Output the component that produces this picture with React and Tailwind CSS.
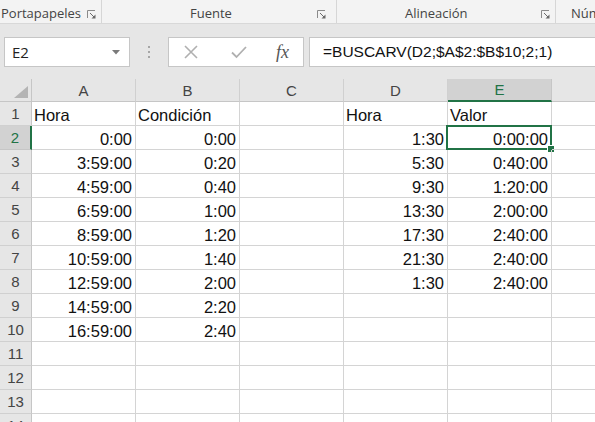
import React from "react";

const A = ["Hora","0:00","3:59:00","4:59:00","6:59:00","8:59:00","10:59:00","12:59:00","14:59:00","16:59:00","","","",""];
const B = ["Condición","0:00","0:20","0:40","1:00","1:20","1:40","2:00","2:20","2:40","","","",""];
const D = ["Hora","1:30","5:30","9:30","13:30","17:30","21:30","1:30","","","","","",""];
const E = ["Valor","0:00:00","0:40:00","1:20:00","2:00:00","2:40:00","2:40:00","2:40:00","","","","","",""];

function Launcher() {
  return (
    <svg width="9" height="9" viewBox="0 0 9 9" className="shrink-0">
      <path d="M0.5 8 V0.5 H8" fill="none" stroke="#8a8a8a" strokeWidth="1" />
      <path d="M3 3 L7.5 7.5" fill="none" stroke="#6a6a6a" strokeWidth="1" />
      <path d="M8.5 8.5 H4.5 L8.5 4.5 Z" fill="#6a6a6a" />
    </svg>
  );
}

function Cell({ v, row, col }) {
  const left = row === 1;
  const selected = row === 2 && col === "E";
  return (
    <div
      className={
        "relative h-[24px] border-r border-b border-[#d4d4d4] flex items-end pb-[2px] text-[16.5px] leading-[16px] text-[#111] whitespace-nowrap " +
        (left ? "justify-start pl-[2px]" : "justify-end pr-[3px]")
      }
    >
      {v}
      {selected && (
        <div className="absolute top-[-1px] left-[-2px] right-[-1px] bottom-[-1px] border-2 border-[#217346]">
          <div className="absolute right-[-5px] bottom-[-5px] w-[8px] h-[8px] bg-[#217346] border border-white" />
        </div>
      )}
    </div>
  );
}

export default function App() {
  const cols = ["A", "B", "C", "D", "E", "F"];
  const rows = Array.from({ length: 14 }, (_, i) => i + 1);
  return (
    <div className="w-[595px] h-[422px] overflow-hidden bg-white" style={{ fontFamily: '"Liberation Sans", Arial, sans-serif' }}>
      {/* Ribbon group labels */}
      <div className="h-[24px] bg-[#f3f3f3] border-b border-[#d8d8d8] flex text-[13px] text-[#444] overflow-hidden" style={{ fontFamily: '"Open Sans", "Noto Sans", sans-serif' }}>
        <div className="w-[102px] shrink-0 border-r border-[#d6d6d6] flex items-center pt-[5px] h-[23px]">
          <span className="w-[87px] pl-[1px] whitespace-nowrap">Portapapeles</span>
          <Launcher />
        </div>
        <div className="w-[235px] shrink-0 border-r border-[#d6d6d6] flex items-center pt-[5px] h-[23px]">
          <span className="pl-[88px] w-[215px]">Fuente</span>
          <Launcher />
        </div>
        <div className="w-[219px] shrink-0 border-r border-[#d6d6d6] flex items-center pt-[5px] h-[23px]">
          <span className="pl-[68px] w-[204px]">Alineación</span>
          <Launcher />
        </div>
        <div className="flex items-center pt-[5px] h-[23px] pl-[15px] whitespace-nowrap">Número</div>
      </div>

      {/* Formula bar */}
      <div className="h-[55px] bg-[#e6e6e6] flex items-start pt-[13px]">
        <div className="ml-[4px] w-[126px] h-[30px] bg-white border border-[#c6c6c6] flex items-center justify-between pl-[7px] pr-[9px] text-[15px] text-[#222]" style={{ fontFamily: '"Open Sans", "Noto Sans", sans-serif' }}>
          <span>E2</span>
          <svg width="8" height="5" viewBox="0 0 8 5"><path d="M0 0 H8 L4 4.5 Z" fill="#7a7a7a" /></svg>
        </div>
        <div className="w-[38px] h-[30px] flex flex-col items-center justify-center gap-[3px]">
          <div className="w-[2px] h-[2px] bg-[#a6a6a6]" />
          <div className="w-[2px] h-[2px] bg-[#a6a6a6]" />
          <div className="w-[2px] h-[2px] bg-[#a6a6a6]" />
        </div>
        <div className="w-[136px] h-[30px] bg-white border border-[#c6c6c6] flex items-center">
          <svg width="14" height="14" viewBox="0 0 14 14" className="ml-[15px]">
            <path d="M1 1 L13 13 M13 1 L1 13" stroke="#b0b0b0" strokeWidth="1.6" fill="none" />
          </svg>
          <svg width="16" height="14" viewBox="0 0 16 14" className="ml-[33px]">
            <path d="M1 7.5 L5.5 12 L15 2" stroke="#b0b0b0" strokeWidth="1.8" fill="none" />
          </svg>
          <span className="ml-[29px] italic text-[18px] text-[#555] leading-none" style={{ fontFamily: '"Liberation Serif", "DejaVu Serif", serif' }}>fx</span>
        </div>
        <div className="ml-[5px] flex-1 h-[30px] bg-white border border-[#c6c6c6] border-r-0 flex items-center pl-[13px] text-[15.5px] text-[#111] whitespace-nowrap">
          =BUSCARV(D2;$A$2:$B$10;2;1)
        </div>
      </div>

      {/* Grid */}
      <div className="grid grid-cols-[32px_104px_104px_104px_104px_104px_104px] w-[656px]">
        {/* header row */}
        <div className="h-[23px] bg-[#e6e6e6] border-r border-b border-[#c6c6c6] relative">
          <svg width="14" height="12" viewBox="0 0 14 12" className="absolute right-[3px] bottom-[3px]">
            <path d="M14 0 V12 H0 Z" fill="#b4b4b4" />
          </svg>
        </div>
        {cols.map((c) =>
          c === "E" ? (
            <div key={c} className="h-[23px] bg-[#d2d2d2] border-r border-[#c6c6c6] border-b-2 border-b-[#217346] flex items-center justify-center pt-[2px] text-[15px] text-[#217346]">
              {c}
            </div>
          ) : (
            <div key={c} className="h-[23px] bg-[#e6e6e6] border-r border-b border-[#d0d0d0] border-b-[#c6c6c6] flex items-center justify-center pt-[2px] text-[15px] text-[#444]">
              {c}
            </div>
          )
        )}
        {rows.map((r) => (
          <React.Fragment key={r}>
            {r === 2 ? (
              <div className="h-[24px] bg-[#d2d2d2] border-r-2 border-[#217346] border-b border-b-[#c6c6c6] flex items-center justify-center pt-[2px] text-[15px] text-[#217346]">
                {r}
              </div>
            ) : (
              <div className="h-[24px] bg-[#e6e6e6] border-r border-b border-[#c6c6c6] border-b-[#d0d0d0] flex items-center justify-center pt-[2px] text-[15px] text-[#444]">
                {r}
              </div>
            )}
            <Cell v={A[r - 1]} row={r} col="A" />
            <Cell v={B[r - 1]} row={r} col="B" />
            <Cell v="" row={r} col="C" />
            <Cell v={D[r - 1]} row={r} col="D" />
            <Cell v={E[r - 1]} row={r} col="E" />
            <Cell v="" row={r} col="F" />
          </React.Fragment>
        ))}
      </div>
    </div>
  );
}
